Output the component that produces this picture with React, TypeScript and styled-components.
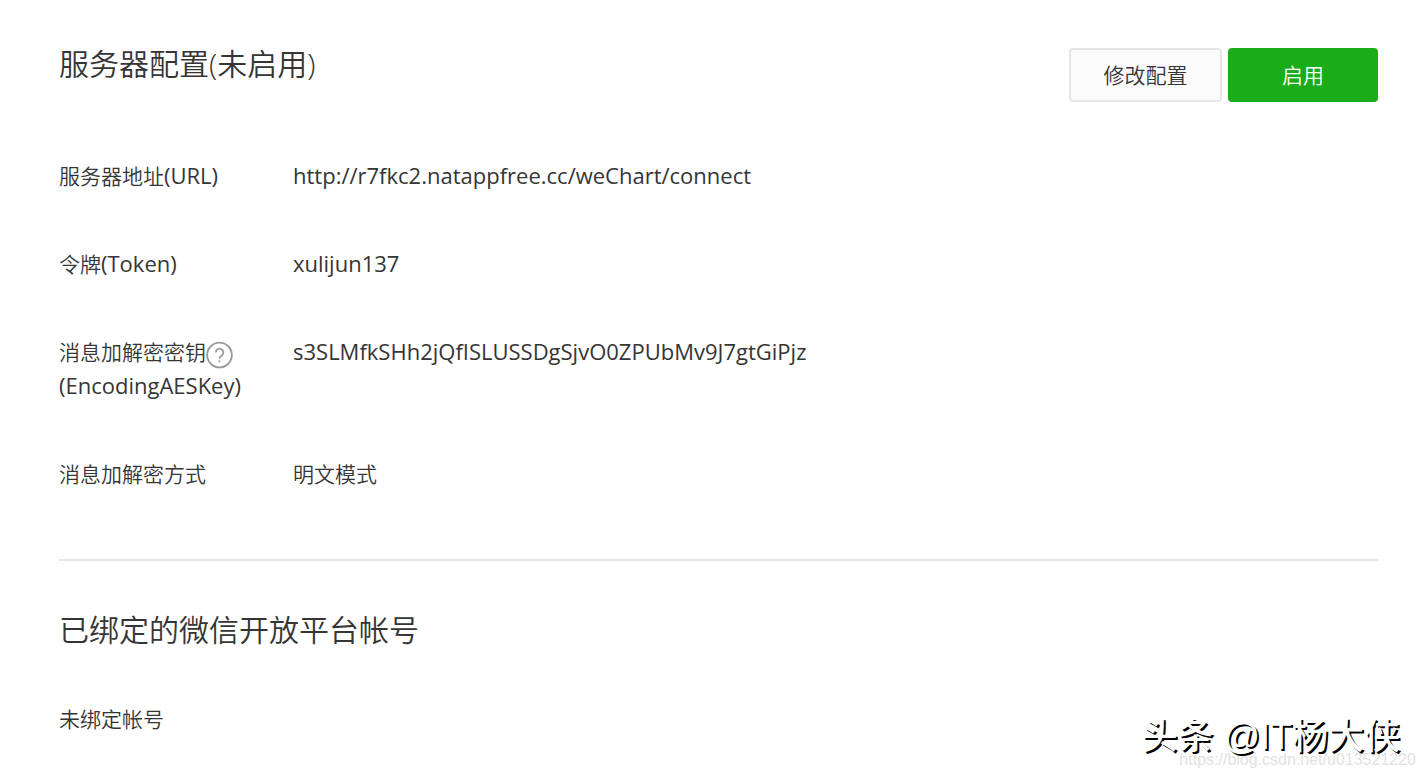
import React from "react";
import styled, { createGlobalStyle } from "styled-components";

const GlobalStyle = createGlobalStyle`
  *, *::before, *::after { box-sizing: border-box; }
  body {
    margin: 0;
    background: #fff;
    color: #353535;
    font-family: "Open Sans", "Noto Sans CJK SC", sans-serif;
    font-size: 21px;
    font-weight: 350;
    line-height: 34px;
  }
`;

const Page = styled.main`
  position: relative;
  min-height: 100vh;
  padding: 48px 47px 40px 59px;
`;

const Section = styled.section`
  & + & {
    margin-top: 68px;
    padding-top: 53px;
    border-top: 2px solid #e7e7eb;
  }
`;

const SectionHeader = styled.header`
  display: flex;
  justify-content: space-between;
  align-items: flex-start;
`;

const Title = styled.h2`
  margin: 0;
  font-size: 30px;
  font-weight: 350;
  line-height: 32px;
`;

const Actions = styled.div`
  display: flex;
  gap: 6px;
`;

const Button = styled.button<{ $primary?: boolean }>`
  min-width: ${(p) => (p.$primary ? 150 : 153)}px;
  height: 54px;
  padding: 0 32px;
  border: 2px solid ${(p) => (p.$primary ? "#1aad19" : "#e6e6e6")};
  border-radius: 4px;
  background: ${(p) => (p.$primary ? "#1aad19" : "#fbfbfb")};
  color: ${(p) => (p.$primary ? "#fff" : "#353535")};
  font: inherit;
  cursor: pointer;
`;

const Fields = styled.dl`
  display: grid;
  gap: 54px;
  margin: 57px 0 0;
`;

const Field = styled.div`
  display: grid;
  grid-template-columns: 234px 1fr;
`;

const Label = styled.dt``;

const Value = styled.dd`
  margin: 0;
`;

const Latin = styled.span`
  font-size: 22px;
  font-weight: 400;
  line-height: 1;
`;

const LabelLine = styled.span`
  display: flex;
  align-items: flex-end;
`;

const HelpIcon = styled.svg`
  width: 27px;
  height: 28px;
  fill: none;
  stroke: #9a9a9a;
  stroke-width: 1.9;
`;

const Note = styled.p`
  margin: 56px 0 0;
`;

const Credit = styled.div`
  position: absolute;
  right: 25px;
  bottom: 17px;
  color: #fff;
  font-family: "Liberation Sans", "Noto Sans CJK SC", sans-serif;
  font-size: 36px;
  font-weight: 500;
  line-height: 48px;
  text-shadow: 2px 2px 0 #000;
`;

const SourceUrl = styled.div`
  position: absolute;
  right: 9px;
  bottom: 8px;
  color: #e2e2e2;
  font-family: "Liberation Sans", sans-serif;
  font-size: 16px;
  line-height: 20px;
`;

export default function App() {
  return (
    <>
      <GlobalStyle />
      <Page>
        <Section>
          <SectionHeader>
            <Title>服务器配置(未启用)</Title>
            <Actions>
              <Button type="button">修改配置</Button>
              <Button type="button" $primary>
                启用
              </Button>
            </Actions>
          </SectionHeader>
          <Fields>
            <Field>
              <Label>
                服务器地址<Latin>(URL)</Latin>
              </Label>
              <Value>
                <Latin>http://r7fkc2.natappfree.cc/weChart/connect</Latin>
              </Value>
            </Field>
            <Field>
              <Label>
                令牌<Latin>(Token)</Latin>
              </Label>
              <Value>
                <Latin>xulijun137</Latin>
              </Value>
            </Field>
            <Field>
              <Label>
                <LabelLine>
                  消息加解密密钥
                  <HelpIcon viewBox="0 0 28 28" aria-hidden="true">
                    <circle cx="14" cy="14" r="12.8" />
                    <path d="M10.2 11.4a3.9 3.9 0 1 1 6.2 3.1c-1.5 1.1-2.4 1.7-2.4 3.5" />
                    <path d="M14 19.6v2" />
                  </HelpIcon>
                </LabelLine>
                <Latin>(EncodingAESKey)</Latin>
              </Label>
              <Value>
                <Latin>s3SLMfkSHh2jQfISLUSSDgSjvO0ZPUbMv9J7gtGiPjz</Latin>
              </Value>
            </Field>
            <Field>
              <Label>消息加解密方式</Label>
              <Value>明文模式</Value>
            </Field>
          </Fields>
        </Section>
        <Section>
          <Title>已绑定的微信开放平台帐号</Title>
          <Note>未绑定帐号</Note>
        </Section>
        <SourceUrl>https://blog.csdn.net/u013521220</SourceUrl>
        <Credit>头条 @IT杨大侠</Credit>
      </Page>
    </>
  );
}
